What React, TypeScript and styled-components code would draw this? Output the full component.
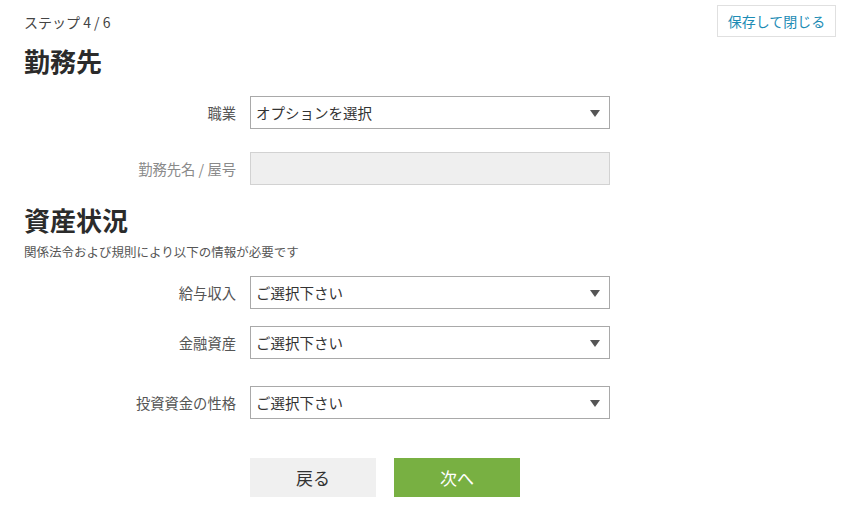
import React from "react";
import styled, { createGlobalStyle } from "styled-components";

const Global = createGlobalStyle`
  html, body { margin: 0; padding: 0; background: #fff; }
  body { font-family: "Noto Sans CJK JP", "Noto Sans", sans-serif; color: #333; }
  * { box-sizing: border-box; }
`;

const Page = styled.div`
  width: 860px;
  height: 526px;
  padding: 0 24px 0 24px;
  display: flex;
  flex-direction: column;
`;

const TopBar = styled.div`
  display: flex;
  justify-content: space-between;
  align-items: flex-start;
  padding-top: 5px;
  height: 37px;
`;

const StepText = styled.div`
  font-size: 14px;
  color: #444;
  line-height: 20px;
  margin-top: 7px;
`;

const SaveButton = styled.button`
  height: 32px;
  width: 119px;
  border: 1px solid #e0e0e0;
  background: #fff;
  color: #1d8cb5;
  font-family: inherit;
  font-size: 14px;
  padding: 0;
  cursor: pointer;
`;

const Heading = styled.h2<{ $mt: number }>`
  margin: ${(p) => p.$mt}px 0 0 0;
  font-size: 26px;
  font-weight: 700;
  color: #2b2b2b;
  line-height: 30px;
`;

const Note = styled.p`
  margin: 9px 0 0 0;
  font-size: 12.5px;
  color: #555;
  line-height: 16px;
`;

const Row = styled.div<{ $mt: number }>`
  display: grid;
  grid-template-columns: 212px 360px;
  column-gap: 14px;
  align-items: center;
  margin-top: ${(p) => p.$mt}px;
`;

const Label = styled.label<{ $muted?: boolean }>`
  text-align: right;
  font-size: 14.3px;
  color: ${(p) => (p.$muted ? "#8a8a8a" : "#555")};
`;

const SelectBox = styled.div`
  height: 33px;
  border: 1px solid #a9a9a9;
  background: #fff;
  display: flex;
  align-items: center;
  justify-content: space-between;
  padding: 0 9px 0 5px;
  font-size: 14.5px;
  color: #333;
`;

const Arrow = styled.span`
  width: 0;
  height: 0;
  border-left: 5.5px solid transparent;
  border-right: 5.5px solid transparent;
  border-top: 7px solid #555;
  margin-top: 2px;
`;

const TextInput = styled.div`
  height: 33px;
  border: 1px solid #d2d2d2;
  background: #efefef;
`;

const ButtonRow = styled.div`
  display: flex;
  gap: 18px;
  margin-top: 39px;
  margin-left: 226px;
`;

const ActionButton = styled.button<{ $primary?: boolean }>`
  width: 126px;
  height: 39px;
  border: none;
  background: ${(p) => (p.$primary ? "#78b042" : "#f0f0f0")};
  color: ${(p) => (p.$primary ? "#fff" : "#333")};
  font-family: inherit;
  font-size: 17px;
  cursor: pointer;
`;

const Select = ({ value }: { value: string }) => (
  <SelectBox>
    <span>{value}</span>
    <Arrow />
  </SelectBox>
);

export default function App() {
  return (
    <Page>
      <Global />
      <TopBar>
        <StepText>ステップ 4 / 6</StepText>
        <SaveButton>保存して閉じる</SaveButton>
      </TopBar>
      <Heading $mt={9}>勤務先</Heading>
      <Row $mt={20}>
        <Label>職業</Label>
        <Select value="オプションを選択" />
      </Row>
      <Row $mt={23}>
        <Label $muted>勤務先名 / 屋号</Label>
        <TextInput />
      </Row>
      <Heading $mt={20}>資産状況</Heading>
      <Note>関係法令および規則により以下の情報が必要です</Note>
      <Row $mt={16}>
        <Label>給与収入</Label>
        <Select value="ご選択下さい" />
      </Row>
      <Row $mt={17}>
        <Label>金融資産</Label>
        <Select value="ご選択下さい" />
      </Row>
      <Row $mt={27}>
        <Label>投資資金の性格</Label>
        <Select value="ご選択下さい" />
      </Row>
      <ButtonRow>
        <ActionButton>戻る</ActionButton>
        <ActionButton $primary>次へ</ActionButton>
      </ButtonRow>
    </Page>
  );
}
